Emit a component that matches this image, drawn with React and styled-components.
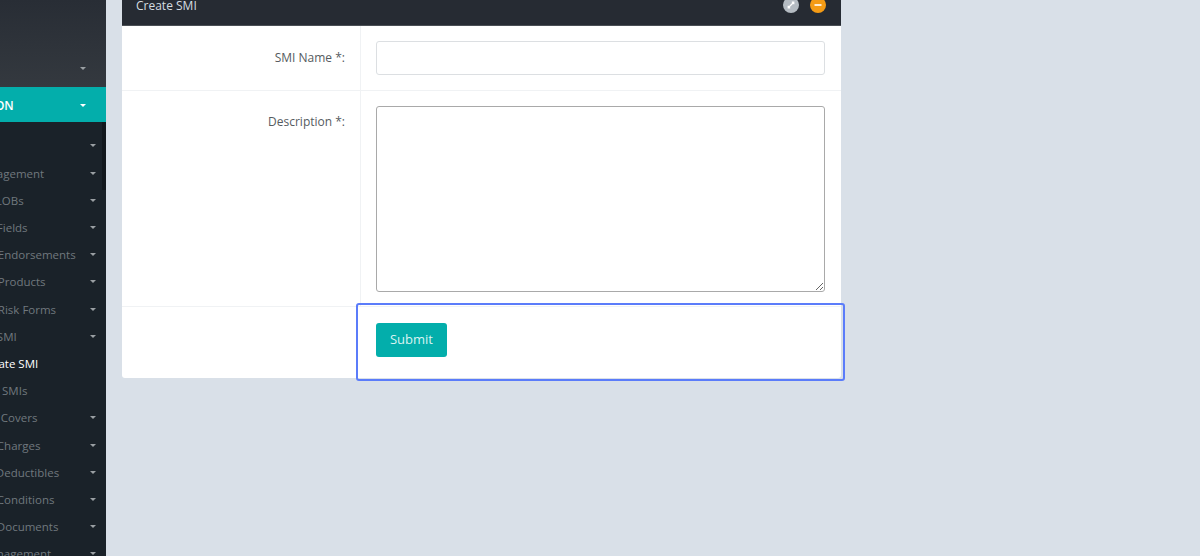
import React from "react";
import styled, { createGlobalStyle } from "styled-components";

const GlobalStyle = createGlobalStyle`
  html, body {
    margin: 0;
    padding: 0;
    height: 100%;
    overflow: hidden;
    background: #d9e0e8;
    font-family: "Open Sans", "Liberation Sans", sans-serif;
    font-size: 12px;
  }
  * { box-sizing: border-box; }
`;

const Page = styled.div`
  display: flex;
  height: 556px;
  overflow: hidden;
`;

const Sidebar = styled.aside`
  position: relative;
  flex: 0 0 106px;
  height: 556px;
  overflow: hidden;
  background: #1a2229;
`;

const SidebarInner = styled.div`
  width: 246px;
  margin-left: -140px;
`;

const UserBlock = styled.div`
  height: 87px;
  padding: 67px 20px 0 0;
  display: flex;
  justify-content: flex-end;
  background: linear-gradient(180deg, #282d35 0%, #34393f 100%);
`;

const SectionRow = styled.div`
  height: 35px;
  padding: 1px 20px 0 51px;
  display: flex;
  align-items: center;
  justify-content: space-between;
  background: #03aeab;
  color: #fff;
  font-weight: 600;
  white-space: nowrap;
`;

const Menu = styled.nav`
  padding-top: 10.4px;
`;

const MenuRow = styled.div`
  height: 27.2px;
  padding: 0 10px 0 ${(p) => p.$indent}px;
  display: flex;
  align-items: center;
  justify-content: space-between;
  color: ${(p) => (p.$active ? "#ffffff" : "#70787e")};
  font-size: 11.5px;
  white-space: nowrap;
`;

const Caret = styled.span`
  width: 0;
  height: 0;
  border-left: 3.5px solid transparent;
  border-right: 3.5px solid transparent;
  border-top: 3.5px solid ${(p) => (p.$light ? "#ffffff" : "#9a9fa3")};
`;

const ScrollThumb = styled.div`
  position: absolute;
  top: 122px;
  right: 0;
  width: 4px;
  height: 68px;
  background: #12181d;
`;

const Main = styled.main`
  flex: 1;
  padding-left: 16px;
`;

const Panel = styled.section`
  width: 719px;
  margin-top: -16px;
  background: #fff;
  border-radius: 0 0 3px 3px;
`;

const PanelHeader = styled.header`
  height: 42px;
  padding: 1px 15px 0 14px;
  display: flex;
  align-items: center;
  justify-content: space-between;
  background: #262b33;
  border-bottom: 1px solid #4a4f55;
  color: #d5dde0;
`;

const HeaderIcons = styled.div`
  display: flex;
  gap: 11px;
`;

const RoundIcon = styled.span`
  width: 16px;
  height: 16px;
  border-radius: 50%;
  display: flex;
  align-items: center;
  justify-content: center;
  background: ${(p) => p.$bg};
`;

const FormRow = styled.div`
  display: grid;
  grid-template-columns: 238px 1fr;
  height: ${(p) => p.$height}px;
  border-bottom: ${(p) => (p.$last ? "none" : "1px solid #f0f2f4")};
`;

const Label = styled.label`
  padding: ${(p) => p.$top}px 15px 0 0;
  text-align: right;
  color: #555b60;
  line-height: 17px;
`;

const Field = styled.div`
  padding: 15px 16px 0;
  border-left: 1px solid #f0f2f4;
`;

const TextInput = styled.input`
  display: block;
  width: 449px;
  height: 34px;
  margin-left: -1px;
  border: 1px solid #dcdfe2;
  border-radius: 3px;
  background: #fff;
  outline: none;
`;

const TextArea = styled.textarea`
  display: block;
  width: 449px;
  height: 186px;
  margin-left: -1px;
  border: 1px solid #a9a9a9;
  border-radius: 3px;
  background: #fff;
  outline: none;
`;

const FooterCell = styled.div`
  position: relative;
  padding: 16px 16px 0;

  &::after {
    content: "";
    position: absolute;
    inset: -4px -4px -3px -4px;
    border: 2px solid #5b7cfa;
    border-radius: 3px;
    pointer-events: none;
  }
`;

const SubmitButton = styled.button`
  display: block;
  width: 71px;
  height: 34px;
  padding: 0 0 3px;
  border: none;
  border-radius: 3px;
  background: #03aeab;
  color: #d9f3f2;
  font-family: inherit;
  font-size: 13px;
`;

const menuItems = [
  { label: "Setup", indent: 91 },
  { label: "User Management", indent: 85 },
  { label: "Manage LOBs", indent: 90 },
  { label: "Manage Fields", indent: 91 },
  { label: "Manage Endorsements", indent: 92 },
  { label: "Manage Products", indent: 92 },
  { label: "Manage Risk Forms", indent: 92 },
  { label: "Manage SMI", indent: 91 },
  { label: "Create SMI", indent: 120, active: true, leaf: true },
  { label: "All SMIs", indent: 126, leaf: true },
  { label: "Manage Covers", indent: 95 },
  { label: "Manage Charges", indent: 91 },
  { label: "Manage Deductibles", indent: 90 },
  { label: "Manage Conditions", indent: 91 },
  { label: "Manage Documents", indent: 91 },
  { label: "Claim Management", indent: 87 },
];

export default function App() {
  return (
    <>
      <GlobalStyle />
      <Page>
        <Sidebar>
          <SidebarInner>
            <UserBlock>
              <Caret />
            </UserBlock>
            <SectionRow>
              <span>ADMINISTRATION</span>
              <Caret $light />
            </SectionRow>
            <Menu>
              {menuItems.map((item) => (
                <MenuRow key={item.label} $indent={item.indent} $active={item.active}>
                  <span>{item.label}</span>
                  {!item.leaf && <Caret />}
                </MenuRow>
              ))}
            </Menu>
          </SidebarInner>
          <ScrollThumb />
        </Sidebar>
        <Main>
          <Panel>
            <PanelHeader>
              <span>Create SMI</span>
              <HeaderIcons>
                <RoundIcon $bg="#b4bbc2">
                  <svg width="10" height="10" viewBox="0 0 10 10" fill="none" stroke="#fff" strokeWidth="1.2">
                    <path d="M2.5 7.5 7.5 2.5M5.8 2.2h2v2M2.2 5.8v2h2" />
                  </svg>
                </RoundIcon>
                <RoundIcon $bg="#f49b15">
                  <svg width="10" height="10" viewBox="0 0 10 10" fill="none" stroke="#fff" strokeWidth="1.6">
                    <path d="M1.5 5h7" />
                  </svg>
                </RoundIcon>
              </HeaderIcons>
            </PanelHeader>
            <FormRow $height={65}>
              <Label $top={23}>SMI Name *:</Label>
              <Field>
                <TextInput type="text" />
              </Field>
            </FormRow>
            <FormRow $height={216}>
              <Label $top={22}>Description *:</Label>
              <Field>
                <TextArea />
              </Field>
            </FormRow>
            <FormRow $height={71} $last>
              <div />
              <FooterCell>
                <SubmitButton type="button">Submit</SubmitButton>
              </FooterCell>
            </FormRow>
          </Panel>
        </Main>
      </Page>
    </>
  );
}
